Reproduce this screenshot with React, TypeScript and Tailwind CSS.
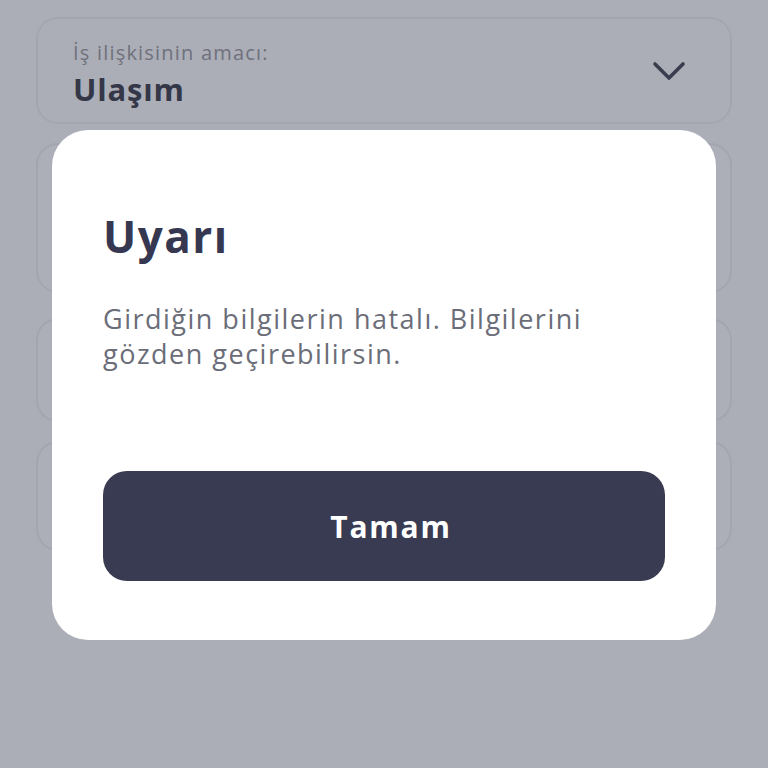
// ─── Background form field ───────────────────────────────────────────────────
function Field({ h }: { h: string }) {
  return <div className={`${h} rounded-[22px] border-2 border-[#a3a5af] bg-[#acaeb8]`} />
}

// ─── Alert dialog ────────────────────────────────────────────────────────────
function AlertDialog() {
  return (
    <div className="absolute left-[52px] top-[130px] w-[664px] h-[510px] rounded-[36px] bg-white flex flex-col px-[51px] pt-[81px] pb-[59px]">
      <h1 className="text-[44px] leading-[50px] font-bold text-[#353850] tracking-[1.5px]">Uyarı</h1>
      <p className="mt-[40px] text-[27px] leading-[35px] text-[#6b6d78] tracking-[1.5px]">
        Girdiğin bilgilerin hatalı. Bilgilerini
        <br />
        gözden geçirebilirsin.
      </p>
      <button className="mt-auto h-[110px] w-full rounded-[24px] bg-[#383b51] pl-[14px] text-white text-[30px] font-bold tracking-[1.8px]">
        Tamam
      </button>
    </div>
  )
}

export default function App() {
  return (
    <div
      className="relative w-[768px] h-[768px] overflow-hidden bg-[#abadb7]"
      style={{ fontFamily: '"Open Sans", "Noto Sans", sans-serif' }}
    >
      {/* Form behind the overlay */}
      <div className="flex flex-col px-[36px] pt-[17px]">
        <div className="h-[107px] rounded-[22px] border-2 border-[#a3a5af] flex items-center justify-between pl-[35px] pr-[44px]">
          <div className="flex flex-col pt-[8px]">
            <span className="text-[20px] leading-[24px] text-[#6f717c] tracking-[1.2px]">İş ilişkisinin amacı:</span>
            <span className="mt-[5px] text-[31px] leading-[38px] font-bold text-[#343747] tracking-[0.8px]">Ulaşım</span>
          </div>
          <svg width="34" height="22" viewBox="0 0 34 22" fill="none" className="mt-[3px]">
            <path d="M3 3 L17 17 L31 3" stroke="#3a3d4d" strokeWidth="3.6" strokeLinecap="round" strokeLinejoin="round" />
          </svg>
        </div>
        <div className="mt-[19px]"><Field h="h-[150px]" /></div>
        <div className="mt-[25px]"><Field h="h-[104px]" /></div>
        <div className="mt-[19px]"><Field h="h-[110px]" /></div>
      </div>

      <AlertDialog />
    </div>
  )
}
